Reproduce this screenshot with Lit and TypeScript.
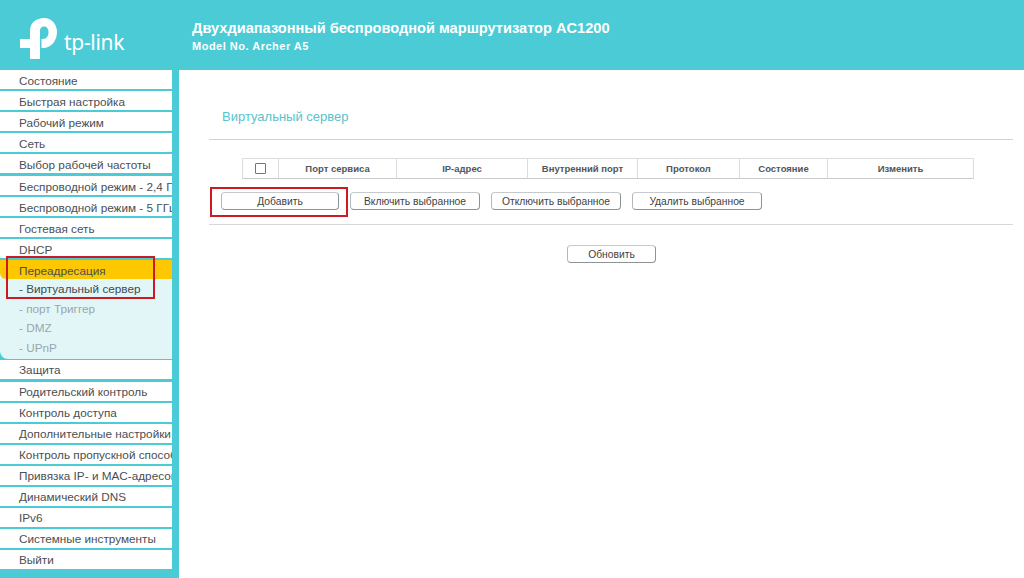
import { LitElement, html, css, svg } from 'lit'
import { customElement } from 'lit/decorators.js'

const TOP_MENU = [
  'Состояние',
  'Быстрая настройка',
  'Рабочий режим',
  'Сеть',
  'Выбор рабочей частоты',
  'Беспроводной режим - 2,4 ГГц',
  'Беспроводной режим - 5 ГГц',
  'Гостевая сеть',
  'DHCP',
]
const SUB_MENU = ['- порт Триггер', '- DMZ', '- UPnP']
const BOTTOM_MENU = [
  'Защита',
  'Родительский контроль',
  'Контроль доступа',
  'Дополнительные настройки',
  'Контроль пропускной способности',
  'Привязка IP- и MAC-адресов',
  'Динамический DNS',
  'IPv6',
  'Системные инструменты',
  'Выйти',
]
const COLUMNS: [string, number][] = [
  ['Порт сервиса', 118],
  ['IP-адрес', 131],
  ['Внутренний порт', 110],
  ['Протокол', 102],
  ['Состояние', 88],
  ['Изменить', 146],
]
const ACTIONS = ['Включить выбранное', 'Отключить выбранное', 'Удалить выбранное']

const logo = svg`<svg class="logo" width="37" height="41" viewBox="0 0 37 41">
  <path fill="#fff" d="M10 21V13C10 5 16 0 24 0C31.500 0 37 6 37 14C37 23 31 30 23 30H21.500V21H23C26.500 21 28.500 18 28.500 14C28.500 10.500 26.500 8.500 24 8.500C21.500 8.500 20 10 20 13V40C20 40.600 19.600 41 19 41H11C10.400 41 10 40.600 10 40V30H1C0.400 30 0 29.600 0 29V22C0 21.400 0.400 21 1 21Z"/>
</svg>`

@customElement('app-root')
export class AppRoot extends LitElement {
  static styles = css`
    :host {
      display: block;
      width: 1024px;
      height: 578px;
      overflow: hidden;
      background: #fff;
      font-family: 'Liberation Sans', Arial, sans-serif;
      color: #4a4f52;
    }

    .header {
      display: flex;
      align-items: flex-start;
      height: 70px;
      background: #4acbd6;
      color: #fff;
      box-sizing: border-box;
      padding: 18px 0 0 20px;
    }

    .logo {
      flex: none;
    }

    .wordmark {
      flex: none;
      width: 64px;
      margin: 11px 0 0 7px;
      font-family: 'Noto Sans', sans-serif;
      font-size: 21px;
      line-height: 26px;
      letter-spacing: -0.3px;
      white-space: nowrap;
    }

    .titles {
      margin: 1px 0 0 64px;
      font-weight: bold;
    }

    .title {
      font-size: 14.600px;
      line-height: 18px;
    }

    .model {
      font-size: 11px;
      line-height: 14px;
      margin-top: 2px;
      letter-spacing: 0.500px;
    }

    .body {
      display: flex;
      height: 508px;
    }

    .sidebar {
      flex: none;
      width: 179px;
      height: 508px;
      box-sizing: border-box;
      border-right: 7px solid #4acbd6;
      background: #4acbd6;
      overflow: hidden;
    }

    .item {
      height: 19px;
      margin-bottom: 2.120px;
      padding-left: 19px;
      background: #fff;
      font-size: 11.750px;
      line-height: 19.500px;
      white-space: nowrap;
      overflow: hidden;
    }

    .item.upper {
      line-height: 21px;
    }

    .group {
      height: 99px;
      margin-bottom: 1.500px;
      box-sizing: border-box;
      background: #e2f6f8;
      border-bottom-left-radius: 8px;
      overflow: hidden;
    }

    .active {
      height: 19.500px;
      padding-left: 19px;
      background: #fdc800;
      border-bottom-left-radius: 6px;
      font-size: 11.750px;
      line-height: 21px;
    }

    .sub {
      height: 19.500px;
      padding-left: 19px;
      font-size: 11.750px;
      line-height: 19.500px;
      color: #9aa6a9;
      white-space: nowrap;
    }

    .sub.current {
      color: #3f4a50;
    }

    .content {
      flex: 1;
      min-width: 0;
      padding: 0 11px 0 30px;
    }

    .heading {
      height: 70px;
      box-sizing: border-box;
      padding: 39px 0 0 13px;
      border-bottom: 1px solid #cfd3d3;
      font-size: 13px;
      line-height: 16px;
      color: #59c3cd;
    }

    .table {
      display: flex;
      width: 732px;
      height: 21px;
      box-sizing: border-box;
      margin: 18px 0 0 33px;
      border: 1px solid #d9dddd;
      border-bottom-color: #c8cccc;
      font-size: 9.500px;
      font-weight: bold;
      color: #50565a;
    }

    .cell {
      flex: none;
      display: flex;
      align-items: center;
      justify-content: center;
      box-sizing: border-box;
      border-left: 1px solid #d9dddd;
    }

    .check {
      flex: none;
      width: 35px;
      display: flex;
      align-items: center;
      justify-content: center;
    }

    .box {
      width: 9px;
      height: 9px;
      border: 1px solid #70757a;
      border-radius: 1px;
    }

    .actions {
      display: flex;
      gap: 11px;
      align-items: center;
      margin: 12px 0 0 12px;
      height: 20px;
    }

    button {
      display: block;
      padding: 0;
      height: 18px;
      box-sizing: border-box;
      border: 1px solid #8e9396;
      border-top-color: #c6cacc;
      border-left-color: #b4b8ba;
      border-radius: 4px;
      background: #fff;
      font-family: inherit;
      font-size: 10.300px;
      color: #3d4245;
    }

    .add {
      width: 118px;
    }

    .action {
      width: 130px;
    }

    .rule {
      height: 1px;
      margin-top: 13px;
      background: #d6d9d9;
    }

    .refresh-row {
      display: flex;
      justify-content: center;
      margin: 20px 0 0 1px;
    }

    .refresh {
      width: 89px;
    }

    .mark {
      position: absolute;
      box-sizing: border-box;
      border: 2px solid #cc1a22;
      pointer-events: none;
    }

    .mark.menu {
      left: 6px;
      top: 256px;
      width: 149px;
      height: 43px;
    }

    .mark.button {
      left: 210px;
      top: 187px;
      width: 138px;
      height: 30px;
    }
  `

  render() {
    return html`
      <div class="header">
        ${logo}
        <div class="wordmark">tp-link</div>
        <div class="titles">
          <div class="title">Двухдиапазонный беспроводной маршрутизатор AC1200</div>
          <div class="model">Model No. Archer A5</div>
        </div>
      </div>
      <div class="body">
        <nav class="sidebar">
          ${TOP_MENU.map((label) => html`<div class="item upper">${label}</div>`)}
          <div class="group">
            <div class="active">Переадресация</div>
            <div class="sub current">- Виртуальный сервер</div>
            ${SUB_MENU.map((label) => html`<div class="sub">${label}</div>`)}
          </div>
          ${BOTTOM_MENU.map((label) => html`<div class="item">${label}</div>`)}
        </nav>
        <main class="content">
          <div class="heading">Виртуальный сервер</div>
          <div class="table">
            <div class="check"><div class="box"></div></div>
            ${COLUMNS.map(
              ([label, width]) => html`<div class="cell" style="width: ${width}px">${label}</div>`
            )}
          </div>
          <div class="actions">
            <button class="add">Добавить</button>
            ${ACTIONS.map((label) => html`<button class="action">${label}</button>`)}
          </div>
          <div class="rule"></div>
          <div class="refresh-row"><button class="refresh">Обновить</button></div>
        </main>
      </div>
      <div class="mark menu"></div>
      <div class="mark button"></div>
    `
  }
}

declare global {
  interface HTMLElementTagNameMap {
    'app-root': AppRoot
  }
}
